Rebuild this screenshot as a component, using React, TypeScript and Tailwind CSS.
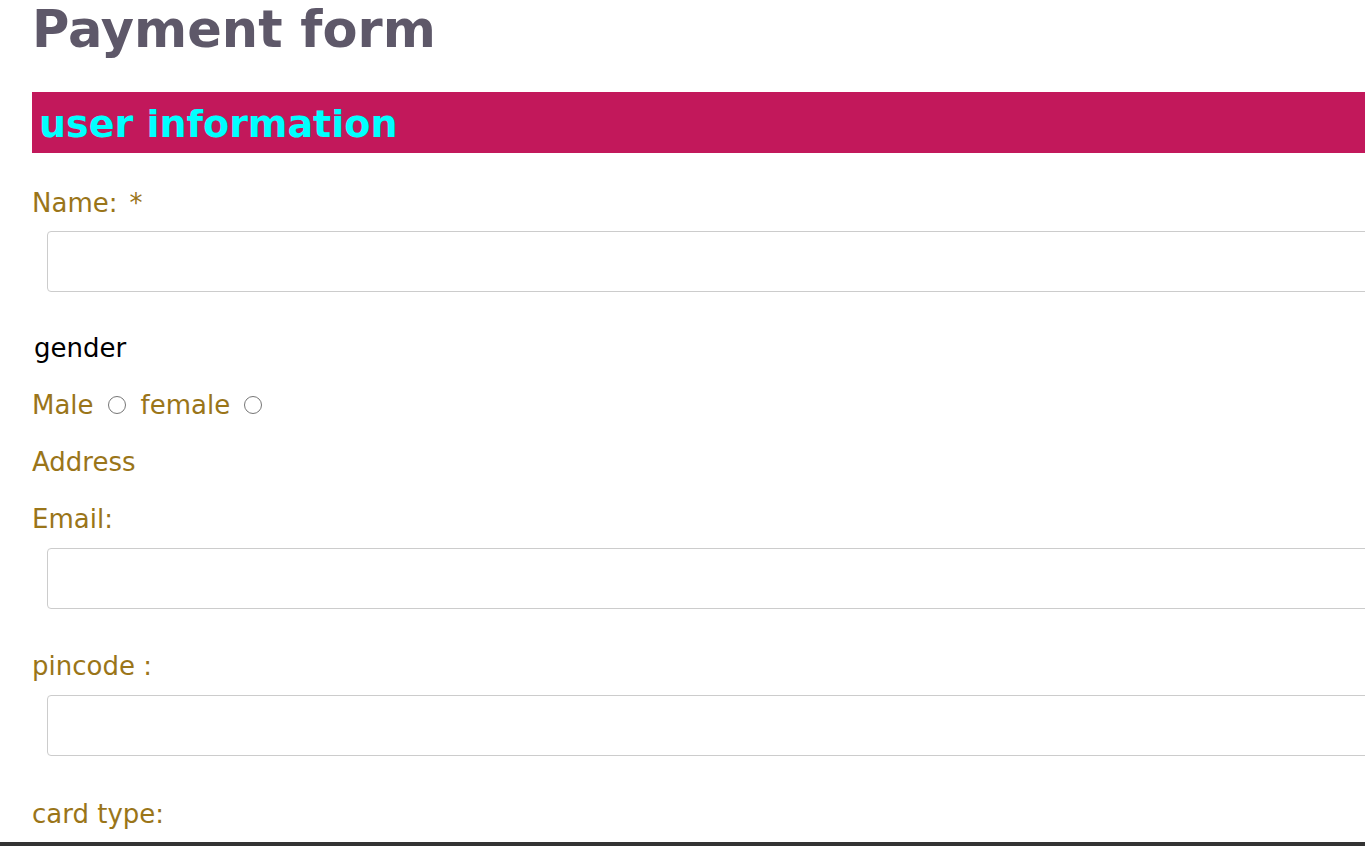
const labelClass = 'block h-[30px] leading-[30px] text-[26px] text-[#9a7519]';
const inputClass = 'block ml-[15px] w-[1500px] h-[61px] rounded-[4px] border border-[#cccccc] bg-white px-3 outline-none';
const radioClass = 'w-[18px] h-[18px] appearance-none rounded-full border border-[#767676] bg-white';

export default function App() {
  return (
    <div className="h-[846px] flex flex-col overflow-hidden bg-white font-['DejaVu_Sans',Verdana,sans-serif]">
      <div className="flex-1 overflow-hidden">
        <form className="w-[1600px] pl-8 pt-[5px]" onSubmit={(e) => e.preventDefault()}>
          <h1 className="text-[51px] leading-[50px] font-bold text-[#5e5869]">Payment form</h1>

          <h2 className="mt-[37px] h-[61px] pt-[13px] pl-[7px] bg-[#c2185b] text-[38px] leading-[38px] font-bold text-[#00ffff]">
            user information
          </h2>

          <label htmlFor="name" className={`${labelClass} mt-[35px]`}>
            Name:<span className="ml-[12px]">*</span>
          </label>
          <input id="name" type="text" className={`${inputClass} mt-[13px]`} />

          <p className="mt-[41px] ml-[2px] h-[30px] leading-[30px] text-[26px] text-black">gender</p>

          <div className="mt-[27px] flex items-center h-[30px] text-[26px] text-[#9a7519]">
            <label htmlFor="male">Male</label>
            <input id="male" type="radio" name="gender" className={`ml-[14px] ${radioClass}`} />
            <label htmlFor="female" className="ml-[15px]">
              female
            </label>
            <input id="female" type="radio" name="gender" className={`ml-[14px] ${radioClass}`} />
          </div>

          <p className={`${labelClass} mt-[27px]`}>Address</p>

          <label htmlFor="email" className={`${labelClass} mt-[27px]`}>
            Email:
          </label>
          <input id="email" type="email" className={`${inputClass} mt-[14px]`} />

          <label htmlFor="pincode" className={`${labelClass} mt-[42px]`}>
            pincode :
          </label>
          <input id="pincode" type="text" className={`${inputClass} mt-[14px]`} />

          <label htmlFor="card" className={`${labelClass} mt-[43px]`}>
            card type:
          </label>
        </form>
      </div>
      <div className="h-[4px] shrink-0 bg-[#333333]" />
    </div>
  );
}
